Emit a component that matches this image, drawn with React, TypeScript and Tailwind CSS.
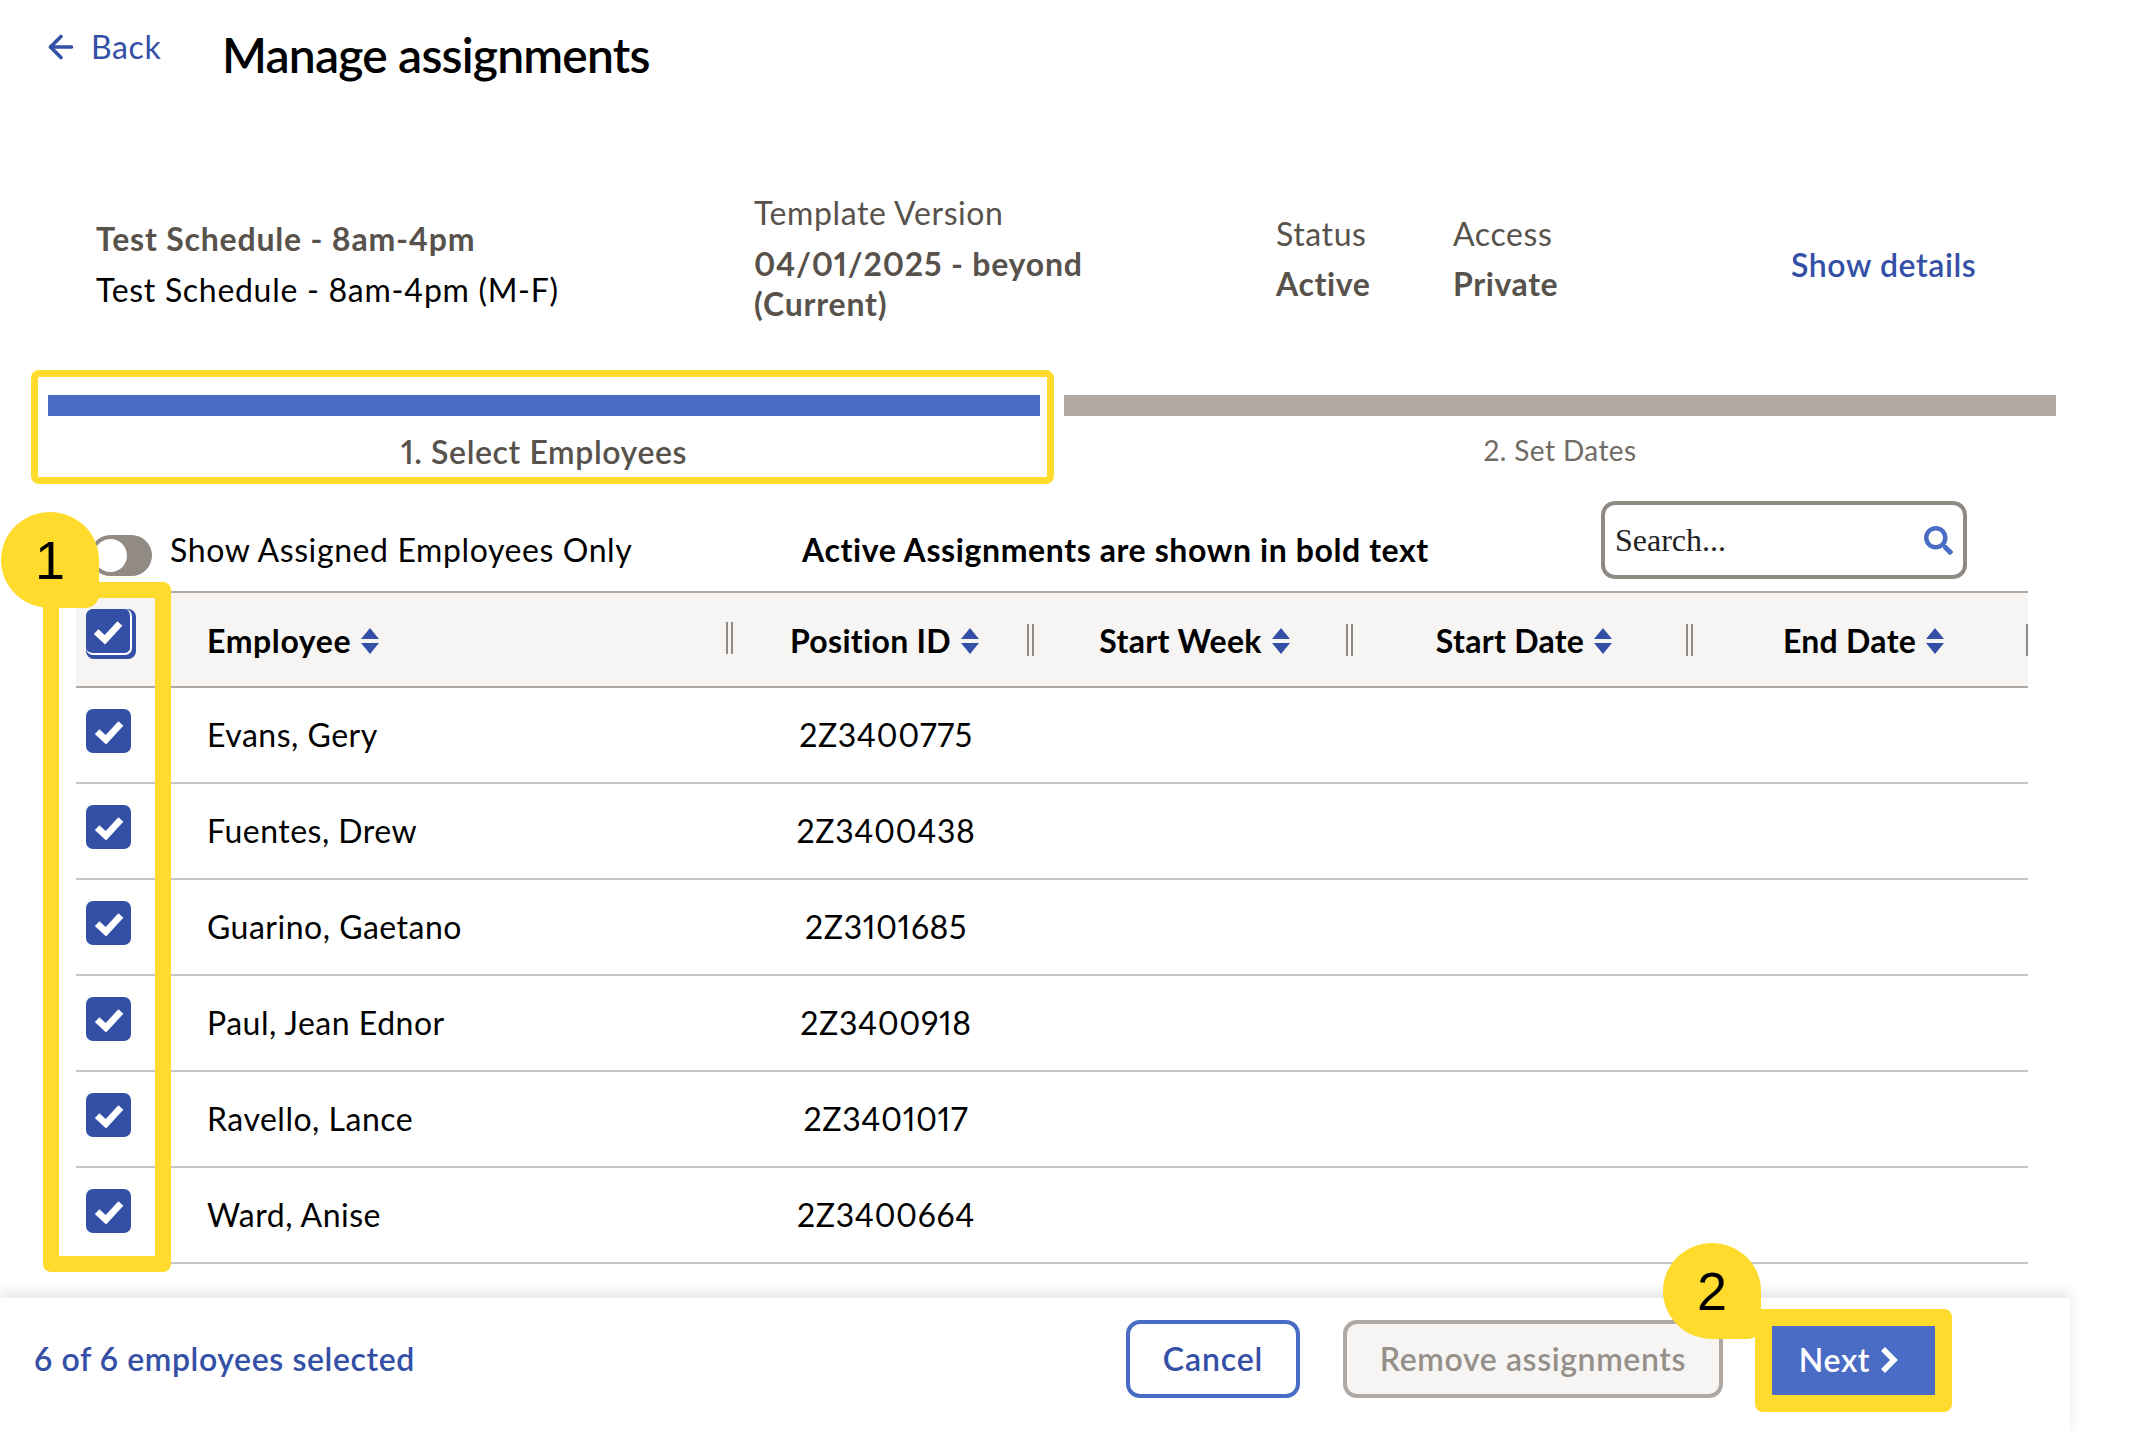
import { ArrowLeft } from "lucide-react";
import { FaSearch } from "react-icons/fa";

const employees = [
    { name: "Evans, Gery", id: "2Z3400775" },
    { name: "Fuentes, Drew", id: "2Z3400438" },
    { name: "Guarino, Gaetano", id: "2Z3101685" },
    { name: "Paul, Jean Ednor", id: "2Z3400918" },
    { name: "Ravello, Lance", id: "2Z3401017" },
    { name: "Ward, Anise", id: "2Z3400664" },
];

const gridCols = "grid grid-cols-[131px_526px_301px_319px_340px_335px]";

function Checkbox({ focused }: { focused?: boolean }) {
    const box = (
        <div
            className={`flex h-[44px] w-[45px] items-center justify-center rounded-[7px] bg-[#3350a6] ${
                focused ? "h-[46px] w-[46px] border-b-2 border-r-2 border-white" : ""
            }`}
        >
            <svg viewBox="0 0 24 24" className="h-[30px] w-[30px]" fill="none">
                <path d="M2.5 12.5 9.5 19 21.5 6" stroke="#fff" strokeWidth="5.4" />
            </svg>
        </div>
    );
    if (!focused) return box;
    // header box shows its focus ring on two sides only
    return <div className="h-[50px] w-[50px] rounded-[8px] bg-[#3350a6]">{box}</div>;
}

function SortIcon() {
    return (
        <svg viewBox="0 0 20 28" className="ml-[9px] h-[28px] w-[20px]" fill="#3350a6">
            <path d="M10 1 19 12H1Z" />
            <path d="M1 16H19L10 27Z" />
        </svg>
    );
}

function HeaderCell({ label, last }: { label: string; last?: boolean }) {
    return (
        <div className={`relative flex items-center justify-center ${last ? "pl-[7px]" : "pl-[3px]"}`}>
            <span className="tracking-[0.3px]">{label}</span>
            <SortIcon />
            <div className={`absolute right-0 top-[29px] h-[32px] border-l-2 border-[#8f8a83] ${last ? "" : "w-[7px] border-r-2"}`} />
        </div>
    );
}

function Badge({ label, className }: { label: string; className: string }) {
    return (
        <div
            className={`absolute flex h-[96px] w-[98px] items-center justify-center rounded-[50%_50%_14%_50%] bg-[#ffdb2d] font-['Liberation_Sans',sans-serif] text-[54px] leading-none tracking-normal text-black ${className}`}
        >
            {label}
        </div>
    );
}

export default function App() {
    return (
        <div className="relative h-[1434px] w-[2131px] overflow-hidden bg-white font-['Lato',sans-serif] text-[32px] tracking-[0.6px] text-black proportional-nums">
            <header className="flex h-[130px] items-start pl-[43px] pt-[23px]">
                <a className="flex w-[179px] items-center text-[#3350a6]">
                    <ArrowLeft className="mr-[12px] h-[36px] w-[36px]" strokeWidth={2.4} />
                    Back
                </a>
                <h1 className="-mt-[4px] text-[48px] font-semibold tracking-[-0.8px]">Manage assignments</h1>
            </header>

            <section className="flex h-[265px] items-start pt-[65px] text-[#57524c]">
                <div className="ml-[96px] w-[658px] pt-[24px]">
                    <div className="font-bold leading-[39px] tracking-[0.8px]">Test Schedule - 8am-4pm</div>
                    <div className="mt-[12px] leading-[39px] tracking-[0.7px] text-black">Test Schedule - 8am-4pm (M-F)</div>
                </div>
                <div className="w-[522px]">
                    <div className="leading-[36px]">Template Version</div>
                    <div className="mt-[13px] w-[340px] font-bold leading-[40px] tracking-[0.8px]">04/01/2025 - beyond (Current)</div>
                </div>
                <div className="w-[177px] pt-[21px]">
                    <div className="leading-[36px]">Status</div>
                    <div className="mt-[14px] font-bold leading-[36px]">Active</div>
                </div>
                <div className="w-[338px] pt-[21px]">
                    <div className="leading-[36px]">Access</div>
                    <div className="mt-[14px] font-bold leading-[36px]">Private</div>
                </div>
                <a className="pt-[52px] font-semibold leading-[36px] text-[#3350a6]">Show details</a>
            </section>

            <section className="ml-[48px] flex h-[76px] w-[2008px] gap-[24px]">
                <div className="flex-1 text-center">
                    <div className="h-[21px] bg-[#4a6cc4]" />
                    <div className="mt-[17px] font-semibold leading-[38px] text-[#57524c]">1. Select Employees</div>
                </div>
                <div className="flex-1 text-center">
                    <div className="h-[21px] bg-[#b0a9a3]" />
                    <div className="mt-[15px] text-[28px] leading-[38px] tracking-[0.4px] text-[#6f6a64]">2. Set Dates</div>
                </div>
            </section>

            <section className="flex h-[120px] items-start pl-[90px] pt-[30px]">
                <div className="mt-[34px] flex h-[41px] w-[62px] items-center rounded-full bg-[#918b84] pl-[4px]">
                    <div className="h-[33px] w-[33px] rounded-full bg-white" />
                </div>
                <span className="ml-[18px] mt-[31px] w-[632px] leading-[36px]">Show Assigned Employees Only</span>
                <span className="mt-[31px] w-[799px] font-bold leading-[36px]">Active Assignments are shown in bold text</span>
                <div className="flex h-[78px] w-[366px] items-center rounded-[14px] border-4 border-[#8f8a83] pl-[10px] pr-[10px]">
                    <span className="flex-1 font-['Liberation_Serif',serif] text-[32px] tracking-normal text-[#222]">Search...</span>
                    <FaSearch className="h-[29px] w-[29px] text-[#4a6cc4]" />
                </div>
            </section>

            <section className="ml-[76px] w-[1952px]">
                <div className={`${gridCols} h-[97px] border-y-2 border-[#b0a9a3] bg-[#f6f5f3] pt-[2px] font-bold`}>
                    <div className="-mt-[2px] flex items-start pl-[10px] pt-[16px]">
                        <Checkbox focused />
                    </div>
                    <div className="relative flex items-center">
                        <span>Employee</span>
                        <SortIcon />
                        <div className="absolute right-0 top-[27px] h-[32px] w-[7px] border-x-2 border-[#8f8a83]" />
                    </div>
                    <HeaderCell label="Position ID" />
                    <HeaderCell label="Start Week" />
                    <HeaderCell label="Start Date" />
                    <HeaderCell label="End Date" last />
                </div>
                {employees.map((e) => (
                    <div key={e.id} className={`${gridCols} h-[96px] border-b-2 border-[#c9c5c0]`}>
                        <div className="flex items-start pl-[10px] pt-[21px]">
                            <Checkbox />
                        </div>
                        <div className="flex items-center tracking-[0.5px]">{e.name}</div>
                        <div className="flex items-center justify-center pl-[5px]">{e.id}</div>
                    </div>
                ))}
            </section>

            <footer className="absolute bottom-0 left-0 flex h-[136px] w-[2070px] items-start bg-white pl-[34px] pt-[22px] shadow-[0_-6px_12px_rgba(0,0,0,0.1)]">
                <span className="flex-1 font-semibold leading-[78px] tracking-[0.6px] text-[#3350a6]">6 of 6 employees selected</span>
                <button className="h-[78px] w-[174px] rounded-[14px] border-4 border-[#4a6cc4] bg-white font-semibold tracking-[0.9px] text-[#3350a6]">
                    Cancel
                </button>
                <button className="ml-[43px] h-[78px] w-[380px] rounded-[14px] border-4 border-[#b0a9a3] bg-[#f6f5f3] font-semibold text-[#96908a]">
                    Remove assignments
                </button>
                <button className="ml-[49px] mr-[135px] mt-[5px] flex h-[71px] w-[163px] items-center justify-center bg-[#4a6cc4] pb-[2px] pr-[8px] font-semibold text-white">
                    Next
                    <svg viewBox="0 0 22 28" className="ml-[8px] h-[28px] w-[22px]" fill="none">
                        <path d="M5 3 16 14 5 25" stroke="#fff" strokeWidth="5.5" />
                    </svg>
                </button>
            </footer>

            {/* yellow callouts drawn over the page */}
            <div className="absolute left-[31px] top-[370px] h-[114px] w-[1023px] rounded-[8px] border-[7px] border-[#ffdb2d]" />
            <div className="absolute left-[43px] top-[582px] h-[690px] w-[128px] rounded-[8px] border-[16px] border-[#ffdb2d]" />
            <div className="absolute left-[1755px] top-[1309px] h-[103px] w-[197px] rounded-[8px] border-[17px] border-[#ffdb2d]" />
            <Badge label="1" className="left-[1px] top-[512px]" />
            <Badge label="2" className="left-[1663px] top-[1243px]" />
        </div>
    );
}
